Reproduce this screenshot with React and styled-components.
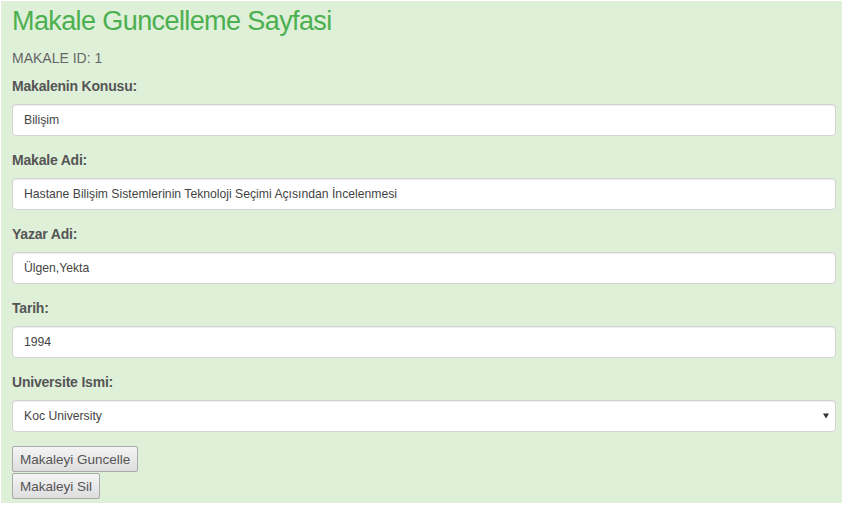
import React from "react";
import styled, { createGlobalStyle } from "styled-components";

const Global = createGlobalStyle`
  html, body { margin: 0; padding: 0; background: #ffffff; }
  body { font-family: "Liberation Sans", Arial, sans-serif; }
  * { box-sizing: border-box; }
`;

const Page = styled.div`
  margin: 1px 0 0 1px;
  height: 502px;
  background: #dff0d8;
  padding: 2px 6px 0 11px;
`;

const Title = styled.h1`
  margin: 0;
  font-family: "Liberation Sans", Arial, sans-serif;
  font-weight: 400;
  font-size: 27px;
  letter-spacing: -0.6px;
  line-height: 36px;
  color: #4caf50;
`;

const IdLine = styled.div`
  margin-top: 9px;
  font-size: 14px;
  line-height: 20px;
  color: #666;
`;

const Form = styled.form`
  display: flex;
  flex-direction: column;
  margin-top: 8px;
`;

const Group = styled.div`
  display: flex;
  flex-direction: column;
  margin-bottom: 14px;
`;

const Label = styled.label`
  font-size: 14px;
  letter-spacing: -0.2px;
  line-height: 20px;
  font-weight: 700;
  color: #555;
  margin-bottom: 8px;
`;

const Input = styled.input`
  height: 32px;
  width: 100%;
  padding: 0 11px;
  border: 1px solid #d2d2d2;
  border-radius: 4px;
  background: #fff;
  box-shadow: inset 0 1px 1px rgba(0, 0, 0, 0.075);
  font-family: "Liberation Sans", Arial, sans-serif;
  font-size: 12.2px;
  color: #444;
  outline: none;
`;

const SelectWrap = styled.div`
  position: relative;
  width: 100%;
`;

const Select = styled.select`
  appearance: none;
  -webkit-appearance: none;
  height: 32px;
  width: 100%;
  padding: 0 24px 0 11px;
  border: 1px solid #d2d2d2;
  border-radius: 4px;
  background: #fff;
  box-shadow: inset 0 1px 1px rgba(0, 0, 0, 0.075);
  font-family: "Liberation Sans", Arial, sans-serif;
  font-size: 12.2px;
  color: #444;
  outline: none;
`;

const Arrow = styled.svg`
  position: absolute;
  right: 7px;
  top: 13px;
  pointer-events: none;
`;

const Buttons = styled.div`
  display: flex;
  flex-direction: column;
  align-items: flex-start;
  gap: 1px;
`;

const Button = styled.button`
  height: 26px;
  padding: 0 7px;
  border: 1px solid #a9a9a9;
  border-radius: 2px;
  background: linear-gradient(#f4f4f4, #dedede);
  font-family: "Liberation Sans", Arial, sans-serif;
  font-size: 13.5px;
  color: #555;
  cursor: pointer;
`;

const fields = [
  { label: "Makalenin Konusu:", value: "Bilişim" },
  { label: "Makale Adi:", value: "Hastane Bilişim Sistemlerinin Teknoloji Seçimi Açısından İncelenmesi" },
  { label: "Yazar Adi:", value: "Ülgen,Yekta" },
  { label: "Tarih:", value: "1994" },
];

export default function App() {
  return (
    <>
      <Global />
      <Page>
        <Title>Makale Guncelleme Sayfasi</Title>
        <IdLine>MAKALE ID: 1</IdLine>
        <Form onSubmit={(e) => e.preventDefault()}>
          {fields.map((f) => (
            <Group key={f.label}>
              <Label>{f.label}</Label>
              <Input defaultValue={f.value} />
            </Group>
          ))}
          <Group>
            <Label>Universite Ismi:</Label>
            <SelectWrap>
              <Select defaultValue="koc">
                <option value="koc">Koc University</option>
              </Select>
              <Arrow width="6" height="6" viewBox="0 0 6 6">
                <path d="M0 0.5 H6 L3 5.5 Z" fill="#333" />
              </Arrow>
            </SelectWrap>
          </Group>
          <Buttons>
            <Button type="button">Makaleyi Guncelle</Button>
            <Button type="button">Makaleyi Sil</Button>
          </Buttons>
        </Form>
      </Page>
    </>
  );
}
